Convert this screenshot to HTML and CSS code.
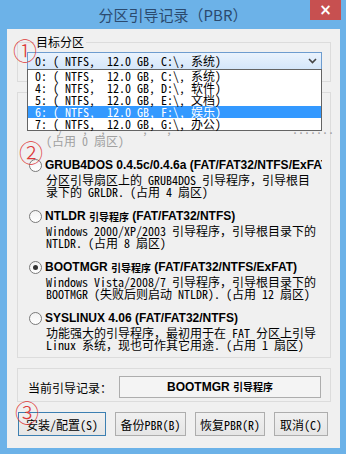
FILE: index.html
```html
<!DOCTYPE html>
<html lang="zh-CN">
  <head>
    <meta charset="UTF-8" />
    <title>分区引导记录（PBR）</title>
    <link rel="stylesheet" href="styles.css">
  </head>
  <body>
    <div class="window">
      <div class="titlebar">
        <span class="title">分区引导记录（PBR）</span>
        <span class="close">×</span>
      </div>
      <div class="client">
        <!-- target partition -->
        <fieldset class="group target">
          <legend>目标分区</legend>
          <div class="combo">
            <span class="combo-text">0: ( NTFS,  12.0 GB, C:\, 系统)</span>
            <svg class="arrow" width="9" height="6" viewBox="0 0 9 6">
              <path d="M1 1 L4.5 4.5 L8 1" fill="none" stroke="#444" stroke-width="1.6" />
            </svg>
            <ul class="droplist">
              <li>0: ( NTFS,  12.0 GB, C:\, 系统)</li>
              <li>4: ( NTFS,  12.0 GB, D:\, 软件)</li>
              <li>5: ( NTFS,  12.0 GB, E:\, 文档)</li>
              <li class="selected">6: ( NTFS,  12.0 GB, F:\, 娱乐)</li>
              <li>7: ( NTFS,  12.0 GB, G:\, 办公)</li>
            </ul>
          </div>
        </fieldset>

        <!-- boot record types -->
        <div class="group options">
          <div class="option disabled">
            <div class="label"><span class="radio"></span>MS-DOS <small>引导程序</small></div>
            <div class="desc">  /   ,  ,      ,   ,                    .......</div>
            <div class="desc">(占用 0 扇区)</div>
          </div>
          <div class="option">
            <div class="label"><span class="radio"></span>GRUB4DOS 0.4.5c/0.4.6a (FAT/FAT32/NTFS/ExFAT)</div>
            <div class="desc">分区引导扇区上的 GRUB4DOS 引导程序，引导根目</div>
            <div class="desc">录下的 GRLDR. (占用 4 扇区)</div>
          </div>
          <div class="option">
            <div class="label"><span class="radio"></span>NTLDR <small>引导程序</small> (FAT/FAT32/NTFS)</div>
            <div class="desc">Windows 2000/XP/2003 引导程序，引导根目录下的</div>
            <div class="desc">NTLDR. (占用 8 扇区)</div>
          </div>
          <div class="option">
            <div class="label"><span class="radio on"></span>BOOTMGR <small>引导程序</small> (FAT/FAT32/NTFS/ExFAT)</div>
            <div class="desc">Windows Vista/2008/7 引导程序，引导根目录下的</div>
            <div class="desc">BOOTMGR (失败后则启动 NTLDR). (占用 12 扇区)</div>
          </div>
          <div class="option">
            <div class="label"><span class="radio"></span>SYSLINUX 4.06 (FAT/FAT32/NTFS)</div>
            <div class="desc">功能强大的引导程序，最初用于在 FAT 分区上引导</div>
            <div class="desc">Linux 系统，现也可作其它用途. (占用 1 扇区)</div>
          </div>
        </div>

        <!-- current record -->
        <div class="group current">
          <span>当前引导记录：</span>
          <div class="field">BOOTMGR <small>引导程序</small></div>
        </div>

        <div class="buttons">
          <button class="default">安装/配置(S)</button>
          <button>备份PBR(B)</button>
          <button>恢复PBR(R)</button>
          <button>取消(C)</button>
        </div>
      </div>

      <span class="mark m1">①</span>
      <span class="mark m2">②</span>
      <span class="mark m3">③</span>
    </div>
  </body>
</html>
```

FILE: styles.css
```css
* {
  margin: 0;
  padding: 0;
  box-sizing: border-box;
}

body {
  background: #6cb2e8;
  font-family: "Noto Sans CJK SC", sans-serif;
  font-size: 12px;
  color: #000;
}

.window {
  position: relative;
  width: 346px;
  height: 454px;
}

.titlebar {
  height: 29px;
  display: grid;
  grid-template-columns: 1fr auto 1fr;
}

.title {
  grid-column: 2;
  font-size: 15px;
  line-height: 29px;
  color: #2b4a6e;
}

.close {
  grid-column: 3;
  justify-self: end;
  width: 31px;
  height: 20px;
  margin-right: 5px;
  background: #c75050;
  color: #fff;
  text-align: center;
  font: bold 15px/20px "DejaVu Sans", sans-serif;
}

.client {
  margin: 0 6px 0 7px;
  height: 419px;
  background: #f0f0f0;
  padding: 6px 9px 0 10px;
}

.group {
  border: 1px solid #dcdcdc;
}

.combo,
.desc,
button {
  font-family: "Noto Sans Mono CJK SC", "Noto Sans CJK SC", monospace;
}

/* target partition */
fieldset.target {
  min-width: 0;
  padding: 3px 8px 11px 9px;
}

legend {
  margin-left: 7px;
  padding: 0 2px;
  line-height: 14px;
}

.combo {
  position: relative;
  height: 18px;
  display: flex;
  align-items: center;
  border: 1px solid #6d9ccf;
  background: linear-gradient(#eaf3fd, #d4e6fa);
  padding-left: 7px;
  line-height: 16px;
}

.combo-text {
  white-space: pre;
}

.arrow {
  margin-left: auto;
  margin-right: 4px;
}

.droplist {
  position: absolute;
  top: 100%;
  left: -1px;
  right: -1px;
  z-index: 2;
  list-style: none;
  background: #fff;
  border: 1px solid #646464;
}

.droplist li {
  height: 12px;
  line-height: 12px;
  padding-left: 7px;
  white-space: pre;
}

.droplist li.selected {
  background: #3399ff;
  color: #fff;
}

/* options */
.options {
  margin-top: 10px;
  padding: 13px 8px 6px 11px;
}

.option + .option {
  margin-top: 10px;
}

.label {
  display: flex;
  align-items: center;
  height: 16px;
  white-space: pre;
  overflow: hidden;
  font: bold 12px "Liberation Sans", sans-serif;
}

.label small,
.field small {
  font: bold 10px "Noto Sans CJK SC", sans-serif;
}

.radio {
  flex: none;
  width: 13px;
  height: 13px;
  margin-right: 3px;
  border: 1px solid #7a7a7a;
  border-radius: 50%;
  background: linear-gradient(#f2f2f2, #fff);
  display: flex;
  align-items: center;
  justify-content: center;
}

.radio.on::after {
  content: "";
  width: 5px;
  height: 5px;
  border-radius: 50%;
  background: #333;
}

.desc {
  padding-left: 17px;
  line-height: 12px;
  white-space: pre;
}

.label + .desc {
  margin-top: 1px;
}

.disabled .desc {
  color: #a0a0a0;
}

/* current record */
.current {
  margin-top: 10px;
  padding: 7px 9px 3px 10px;
  display: flex;
  align-items: center;
}

.field {
  margin-left: auto;
  width: 202px;
  height: 22px;
  border: 1px solid #adadad;
  background: #f4f4f4;
  text-align: center;
  font: bold 12px/20px "Liberation Sans", sans-serif;
}

/* buttons */
.buttons {
  margin-top: 10px;
  padding-left: 1px;
  display: flex;
  gap: 9px;
}

button {
  height: 24px;
  font-size: 12px;
  border: 1px solid #adadad;
  background: linear-gradient(#f0f0f0, #e5e5e5);
  color: #000;
}

button:nth-child(1) { width: 88px; border-color: #3c7fb1; }
button:nth-child(2) { width: 71px; }
button:nth-child(3) { width: 70px; }
button:nth-child(4) { width: 54px; }

/* red annotation marks */
.mark {
  position: absolute;
  width: 24px;
  height: 24px;
  display: flex;
  align-items: center;
  justify-content: center;
  color: #dd3b3b;
  font-size: 24px;
  font-weight: 300;
  line-height: 24px;
}

.m1 { left: 13px; top: 38px; }
.m2 { left: 19px; top: 140px; }
.m3 { left: 15px; top: 400px; }
```
